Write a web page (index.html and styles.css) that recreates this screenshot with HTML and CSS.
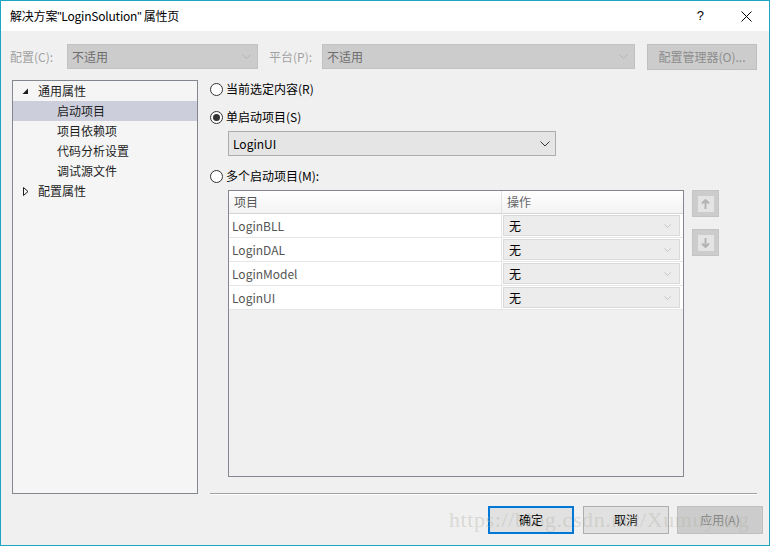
FILE: index.html
```html
<!DOCTYPE html>
<html lang="zh-CN">
<head>
<meta charset="utf-8">
<title>属性页</title>
<link rel="stylesheet" href="styles.css">
</head>
<body>
<div class="window">
  <div class="titlebar">
    <span class="title">解决方案<span class="q">"</span>LoginSolution<span class="q">"</span> 属性页</span>
    <span class="tb-help">?</span>
    <svg class="tb-close" width="11" height="11" viewBox="0 0 11 11"><path d="M0.5 0.5L10.5 10.5M10.5 0.5L0.5 10.5" stroke="#000" stroke-width="1" fill="none"/></svg>
  </div>
  <div class="body">
    <div class="toolbar">
      <span class="lbl lbl-config">配置(C):</span>
      <div class="combo combo-disabled combo-config"><span>不适用</span><svg class="chev" width="9" height="5" viewBox="0 0 9 5"><path d="M0.5 0.5L4.5 4.5L8.5 0.5" stroke="#b5b5b5" fill="none"/></svg></div>
      <span class="lbl lbl-platform">平台(P):</span>
      <div class="combo combo-disabled combo-platform"><span>不适用</span><svg class="chev" width="9" height="5" viewBox="0 0 9 5"><path d="M0.5 0.5L4.5 4.5L8.5 0.5" stroke="#b5b5b5" fill="none"/></svg></div>
      <div class="btn btn-disabled btn-mgr">配置管理器(O)...</div>
    </div>
    <div class="main">
      <div class="tree">
        <div class="node lvl0"><svg class="exp" width="7" height="7" viewBox="0 0 7 7"><path d="M6 0.5V6H0.5Z" fill="#1e1e1e"/></svg>通用属性</div>
        <div class="node lvl1 selected">启动项目</div>
        <div class="node lvl1">项目依赖项</div>
        <div class="node lvl1">代码分析设置</div>
        <div class="node lvl1">调试源文件</div>
        <div class="node lvl0"><svg class="col" width="6" height="9" viewBox="0 0 6 9"><path d="M0.5 0.5L5 4.5L0.5 8.5Z" fill="none" stroke="#1e1e1e"/></svg>配置属性</div>
      </div>
      <div class="pane">
        <label class="radio r1"><span class="circle"></span>当前选定内容(R)</label>
        <label class="radio r2"><span class="circle on"></span>单启动项目(S)</label>
        <div class="combo combo-main"><span>LoginUI</span><svg class="chev" width="10" height="6" viewBox="0 0 10 6"><path d="M0.5 0.5L5 5L9.5 0.5" stroke="#333" fill="none"/></svg></div>
        <label class="radio r3"><span class="circle"></span>多个启动项目(M):</label>
        <div class="gridrow">
          <div class="grid">
            <div class="ghead"><div class="c1">项目</div><div class="c2">操作</div></div>
            <div class="grow"><div class="c1">LoginBLL</div><div class="c2"><div class="cell-combo">无<svg class="chev" width="7" height="4" viewBox="0 0 7 4"><path d="M0.5 0.5L3.5 3.5L6.5 0.5" stroke="#c4c4c4" fill="none"/></svg></div></div></div>
            <div class="grow"><div class="c1">LoginDAL</div><div class="c2"><div class="cell-combo">无<svg class="chev" width="7" height="4" viewBox="0 0 7 4"><path d="M0.5 0.5L3.5 3.5L6.5 0.5" stroke="#c4c4c4" fill="none"/></svg></div></div></div>
            <div class="grow"><div class="c1">LoginModel</div><div class="c2"><div class="cell-combo">无<svg class="chev" width="7" height="4" viewBox="0 0 7 4"><path d="M0.5 0.5L3.5 3.5L6.5 0.5" stroke="#c4c4c4" fill="none"/></svg></div></div></div>
            <div class="grow"><div class="c1">LoginUI</div><div class="c2"><div class="cell-combo">无<svg class="chev" width="7" height="4" viewBox="0 0 7 4"><path d="M0.5 0.5L3.5 3.5L6.5 0.5" stroke="#c4c4c4" fill="none"/></svg></div></div></div>
          </div>
          <div class="movebtns">
            <div class="mbtn"><span class="micon"><svg width="9" height="10" viewBox="0 0 9 10"><path d="M4.5 1V10M1 4.5L4.5 1L8 4.5" stroke="#b3b3b3" stroke-width="2" fill="none"/></svg></span></div>
            <div class="mbtn"><span class="micon"><svg width="9" height="10" viewBox="0 0 9 10"><path d="M4.5 0V9M1 5.5L4.5 9L8 5.5" stroke="#b3b3b3" stroke-width="2" fill="none"/></svg></span></div>
          </div>
        </div>
        <div class="sep"></div>
      </div>
    </div>
    <div class="footer">
      <div class="btn btn-default">确定</div>
      <div class="btn">取消</div>
      <div class="btn btn-disabled">应用(A)</div>
      <span class="watermark">https://blog.csdn.net/Xumuyang</span>
    </div>
  </div>
</div>
</body>
</html>
```

FILE: styles.css
```css
* { box-sizing: border-box; }
html, body { margin: 0; padding: 0; }
body {
  width: 770px;
  height: 546px;
  overflow: hidden;
  font-family: "Noto Sans CJK SC", "Noto Sans", sans-serif;
  font-size: 12px;
  color: #1e1e1e;
  background: #f0f0f0;
}
.window {
  width: 770px;
  height: 546px;
  border: 1px solid #1ba6c3;
  display: flex;
  flex-direction: column;
  background: #f0f0f0;
}
.titlebar {
  height: 30px;
  background: #fff;
  display: flex;
  align-items: center;
  padding-left: 9px;
  flex: none;
}
.title { font-size: 12px; line-height: 16px; color: #000; flex: 1; letter-spacing: -0.2px; }
.q { font-family: "Liberation Sans", sans-serif; }
.tb-help { font-size: 13px; line-height: 16px; color: #000; margin-right: 37px; font-family: "Liberation Sans", sans-serif; }
.tb-close { margin-right: 17px; }
.body { flex: 1; display: flex; flex-direction: column; position: relative; }
.toolbar {
  margin-top: 13px;
  height: 25px;
  display: flex;
  align-items: center;
  padding-left: 9px;
}
.lbl { color: #a2a2a2; line-height: 16px; }
.lbl-config { width: 57px; }
.lbl-platform { width: 53px; margin-left: 11px; }
.combo {
  height: 25px;
  display: flex;
  align-items: center;
  justify-content: space-between;
  padding: 0 6px 0 4px;
  line-height: 16px;
}
.combo-disabled {
  background: #cccccc;
  border: 1px solid #c2c2c2;
  color: #6d6d6d;
}
.combo-config { width: 191px; }
.combo-platform { width: 313px; }
.btn {
  width: 86px;
  height: 28px;
  border: 1px solid #adadad;
  background: #e1e1e1;
  display: flex;
  align-items: center;
  justify-content: center;
  line-height: 16px;
  color: #000;
}
.btn-disabled { background: #cccccc; border-color: #bfbfbf; color: #838383; }
.btn-mgr { width: 110px; height: 26px; margin-left: 12px; color: #8c8c8c; }
.btn-default { border: 2px solid #0078d7; }
.main {
  margin-top: 11px;
  display: flex;
  padding-left: 11px;
}
.tree {
  width: 186px;
  height: 414px;
  border: 1px solid #828790;
  background: #f5f5f5;
  flex: none;
}
.node {
  height: 20px;
  line-height: 20px;
  position: relative;
  color: #1e1e1e;
}
.lvl0 { padding-left: 25px; }
.lvl1 { padding-left: 44px; }
.selected { background: #cccedb; }
.exp { position: absolute; left: 9px; top: 7px; }
.col { position: absolute; left: 10px; top: 6px; }
.pane {
  margin-left: 12px;
  flex: 1;
  display: flex;
  flex-direction: column;
}
.radio {
  height: 18px;
  display: flex;
  align-items: center;
  line-height: 18px;
  color: #000;
}
.r1 { margin-top: 0; }
.r2 { margin-top: 10px; }
.r3 { margin-top: 11px; }
.circle {
  width: 13px;
  height: 13px;
  border: 1px solid #333;
  border-radius: 50%;
  background: #fff;
  margin-right: 3px;
  display: flex;
  align-items: center;
  justify-content: center;
}
.circle.on::after {
  content: "";
  width: 7px;
  height: 7px;
  border-radius: 50%;
  background: #333;
}
.combo-main {
  margin-top: 5px;
  margin-left: 18px;
  width: 328px;
  height: 25px;
  background: #e5e5e5;
  border: 1px solid #acacac;
  color: #000;
  padding: 0 5px 0 4px;
}
.gridrow {
  margin-top: 5px;
  margin-left: 18px;
  display: flex;
}
.grid {
  width: 456px;
  height: 287px;
  border: 1px solid #828790;
  background: #f0f0f0;
}
.ghead {
  height: 23px;
  display: flex;
  background: linear-gradient(#ffffff, #f3f3f3);
  border-bottom: 1px solid #d5d5d5;
  color: #555;
}
.ghead .c1 { width: 273px; padding-left: 5px; line-height: 22px; border-right: 1px solid #e2e2e2; }
.ghead .c2 { flex: 1; padding-left: 5px; line-height: 22px; color: #666; }
.grow {
  height: 24px;
  display: flex;
  background: #fff;
  border-bottom: 1px solid #e6e6e6;
}
.grow .c1 { width: 273px; padding-left: 3px; line-height: 23px; color: #555; border-right: 1px solid #e6e6e6; }
.grow .c2 { flex: 1; padding: 1px 3px 1px 1px; }
.cell-combo {
  height: 21px;
  background: #ececec;
  border: 1px solid #d9d9d9;
  display: flex;
  align-items: center;
  justify-content: space-between;
  padding: 0 8px 0 5px;
  line-height: 16px;
  color: #000;
}
.movebtns { margin-left: 8px; display: flex; flex-direction: column; gap: 12px; }
.mbtn {
  width: 27px;
  height: 27px;
  background: #cccccc;
  border: 1px solid #c4c4c4;
  display: flex;
  align-items: center;
  justify-content: center;
}
.micon {
  width: 16px;
  height: 16px;
  background: #e4e4e4;
  display: flex;
  align-items: center;
  justify-content: center;
}
.sep {
  margin-top: 16px;
  width: 547px;
  height: 2px;
  border-top: 1px solid #a0a0a0;
  border-bottom: 1px solid #ffffff;
}
.footer {
  margin-top: 11px;
  display: flex;
  justify-content: flex-end;
  gap: 9px;
  padding-right: 6px;
  position: relative;
}
.footer .btn:last-of-type { margin-left: -1px; }
.watermark {
  position: absolute;
  left: 448px;
  top: 0px;
  font-family: "Liberation Serif", serif;
  font-size: 22px;
  line-height: 28px;
  color: rgba(180, 180, 170, 0.4);
  letter-spacing: 0.6px;
  pointer-events: none;
}
```
